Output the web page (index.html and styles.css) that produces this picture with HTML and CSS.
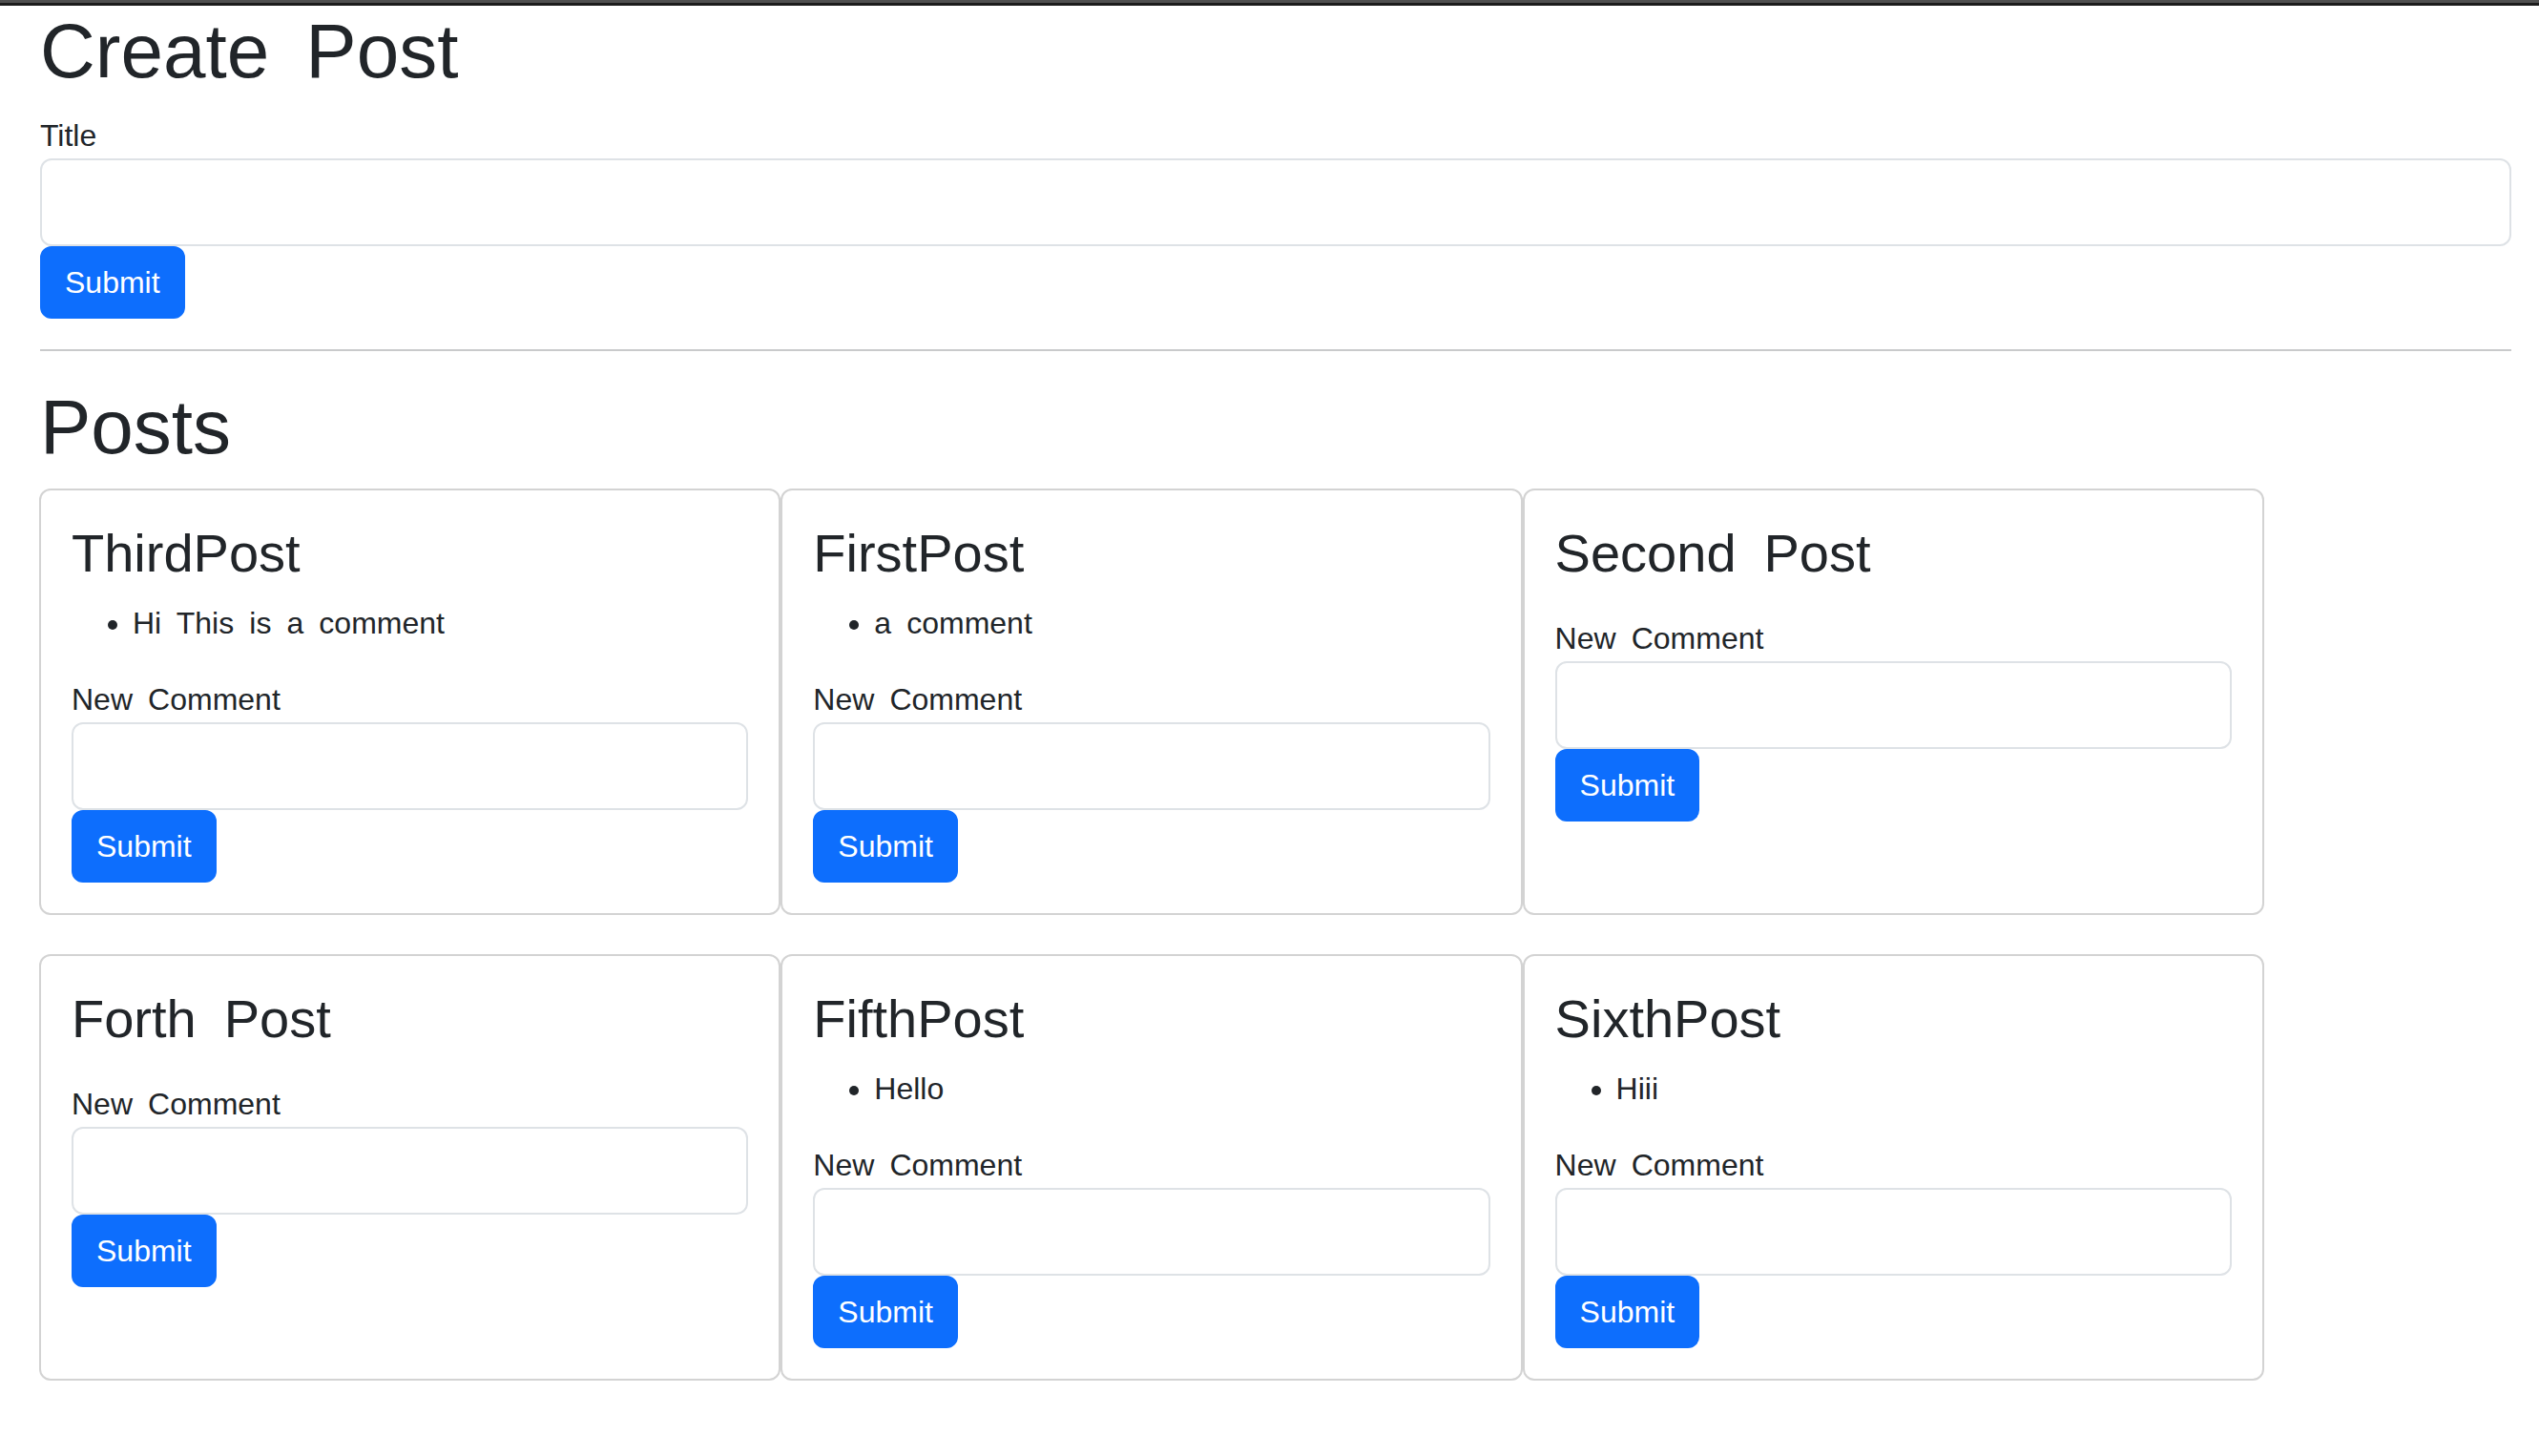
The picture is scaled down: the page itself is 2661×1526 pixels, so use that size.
FILE: index.html
```html
<!DOCTYPE html>
<html lang="en">
<head>
<meta charset="utf-8">
<title>Posts</title>
<link rel="stylesheet" href="styles.css">
</head>
<body>
<div class="topbar"></div>
<main class="page">
  <h1 class="heading">Create Post</h1>
  <form class="form">
    <label class="label">Title</label>
    <input class="field" type="text">
    <button class="btn" type="button">Submit</button>
  </form>
  <hr class="rule">
  <h1 class="heading">Posts</h1>
  <div class="posts">
    <div class="card">
      <h3 class="card-title">ThirdPost</h3>
      <ul class="comments"><li>Hi This is a comment</li></ul>
      <form class="form">
        <label class="label">New Comment</label>
        <input class="field" type="text">
        <button class="btn" type="button">Submit</button>
      </form>
    </div>
    <div class="card">
      <h3 class="card-title">FirstPost</h3>
      <ul class="comments"><li>a comment</li></ul>
      <form class="form">
        <label class="label">New Comment</label>
        <input class="field" type="text">
        <button class="btn" type="button">Submit</button>
      </form>
    </div>
    <div class="card">
      <h3 class="card-title">Second Post</h3>
      <ul class="comments"></ul>
      <form class="form">
        <label class="label">New Comment</label>
        <input class="field" type="text">
        <button class="btn" type="button">Submit</button>
      </form>
    </div>
    <div class="card">
      <h3 class="card-title">Forth Post</h3>
      <ul class="comments"></ul>
      <form class="form">
        <label class="label">New Comment</label>
        <input class="field" type="text">
        <button class="btn" type="button">Submit</button>
      </form>
    </div>
    <div class="card">
      <h3 class="card-title">FifthPost</h3>
      <ul class="comments"><li>Hello</li></ul>
      <form class="form">
        <label class="label">New Comment</label>
        <input class="field" type="text">
        <button class="btn" type="button">Submit</button>
      </form>
    </div>
    <div class="card">
      <h3 class="card-title">SixthPost</h3>
      <ul class="comments"><li>Hiii</li></ul>
      <form class="form">
        <label class="label">New Comment</label>
        <input class="field" type="text">
        <button class="btn" type="button">Submit</button>
      </form>
    </div>
  </div>
</main>
</body>
</html>
```

FILE: styles.css
```css
* {
  box-sizing: border-box;
}

html, body {
  margin: 0;
  padding: 0;
  background: #ffffff;
}

body {
  font-family: "Liberation Sans", Arial, sans-serif;
  font-size: 32px;
  line-height: 48px;
  color: #212529;
  word-spacing: 0.225em;
}

.topbar {
  height: 6px;
  background: linear-gradient(to bottom, #505050 0, #505050 3px, #1c1c1c 3px, #1c1c1c 6px);
}

.page {
  padding: 0 29px 0 42px;
}

.heading {
  margin: 0 0 16px;
  font-size: 80px;
  font-weight: 400;
  line-height: 96px;
  word-spacing: 0.2em;
}

.form {
  display: flex;
  flex-direction: column;
  align-items: flex-start;
  margin: 0;
}

.label {
  display: block;
  font-size: 32px;
  line-height: 48px;
}

.field {
  align-self: stretch;
  display: block;
  width: 100%;
  height: 92px;
  margin: 0;
  padding: 12px 24px;
  font-family: inherit;
  font-size: 32px;
  border: 2px solid #dee2e6;
  border-radius: 12px;
  background: #ffffff;
  outline: none;
}

.btn {
  display: block;
  margin: 0;
  padding: 12px 24px;
  font-family: inherit;
  font-size: 32px;
  line-height: 48px;
  word-spacing: normal;
  color: #ffffff;
  background: #0d6efd;
  border: 2px solid #0d6efd;
  border-radius: 12px;
  cursor: pointer;
}

.rule {
  margin: 32px 0;
  border: 0;
  border-top: 2px solid #c9cacb;
  opacity: 1;
}

.posts {
  display: flex;
  flex-wrap: wrap;
  align-items: stretch;
  margin-left: -1px;
}

.card {
  width: 30%;
  margin-bottom: 41px;
  padding: 32px;
  border: 2px solid #d3d3d3;
  border-radius: 12px;
  background: #ffffff;
}

.card-title {
  margin: 0 0 16px;
  font-size: 56px;
  font-weight: 400;
  line-height: 67px;
  word-spacing: 0.24em;
}

.comments {
  margin: 0 0 32px;
  padding-left: 64px;
}

.comments li {
  font-size: 32px;
  line-height: 48px;
}
```
